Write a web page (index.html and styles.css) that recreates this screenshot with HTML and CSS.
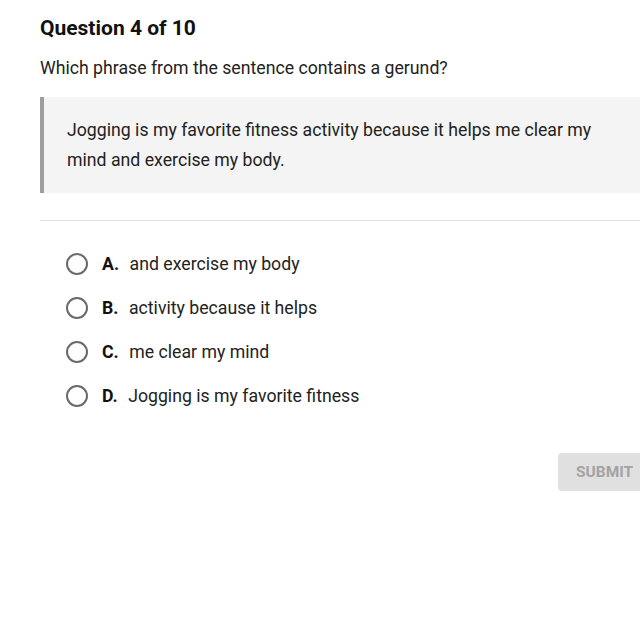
FILE: index.html
```html
<!DOCTYPE html>
<html>
<head>
<meta charset="utf-8">
<link rel="stylesheet" href="styles.css">
</head>
<body>
<div class="page">
  <h1 class="title">Question 4 of 10</h1>
  <p class="prompt">Which phrase from the sentence contains a gerund?</p>
  <blockquote class="quote">Jogging is my favorite fitness activity because it helps me clear my mind and exercise my body.</blockquote>
  <hr class="divider">
  <ul class="options">
    <li class="option"><span class="radio"></span><span class="letter">A.</span><span class="text">and exercise my body</span></li>
    <li class="option"><span class="radio"></span><span class="letter">B.</span><span class="text">activity because it helps</span></li>
    <li class="option"><span class="radio"></span><span class="letter">C.</span><span class="text">me clear my mind</span></li>
    <li class="option"><span class="radio"></span><span class="letter">D.</span><span class="text">Jogging is my favorite fitness</span></li>
  </ul>
  <div class="actions"><button class="submit">SUBMIT</button></div>
</div>
</body>
</html>
```
FILE: styles.css
```css
html, body {
  margin: 0;
  padding: 0;
  background: #fff;
  overflow: hidden;
}
body {
  font-family: Roboto, "Liberation Sans", sans-serif;
  color: #212121;
}
.page {
  padding: 16px 0 0 40px;
  width: 620px;
}
.title {
  margin: 0;
  font-size: 21px;
  font-weight: 700;
  line-height: 24px;
  color: #111;
}
.prompt {
  margin: 16px 0 0;
  font-size: 17.7px;
  line-height: 24px;
  color: #222;
}
.quote {
  margin: 17px 0 0;
  padding: 18px 34px 18px 23px;
  background: #f4f4f4;
  border-left: 4px solid #9e9e9e;
  font-size: 17.7px;
  line-height: 30px;
  color: #222;
}
.divider {
  margin: 27px 0 0;
  border: 0;
  border-top: 1px solid #e2e2e2;
  height: 0;
}
.options {
  list-style: none;
  margin: 30.5px 0 0;
  padding: 0 0 0 26px;
  display: flex;
  flex-direction: column;
  gap: 20.3px;
}
.option {
  display: flex;
  align-items: center;
  height: 24px;
  font-size: 17.7px;
  color: #222;
}
.radio {
  width: 18px;
  height: 18px;
  border: 2px solid #6a6a6a;
  border-radius: 50%;
  box-sizing: content-box;
  margin-right: 14px;
  flex: none;
}
.letter {
  font-weight: 700;
  margin-right: 10.5px;
  color: #111;
}
.actions {
  display: flex;
  justify-content: flex-end;
  margin-top: 44.5px;
}
.submit {
  width: 102px;
  height: 38px;
  border: 0;
  border-radius: 4px;
  background: #e0e0e0;
  color: #a3a3a3;
  font-family: Roboto, "Liberation Sans", sans-serif;
  font-size: 15.5px;
  font-weight: 700;
  text-align: left;
  padding-left: 18px;
}
```
